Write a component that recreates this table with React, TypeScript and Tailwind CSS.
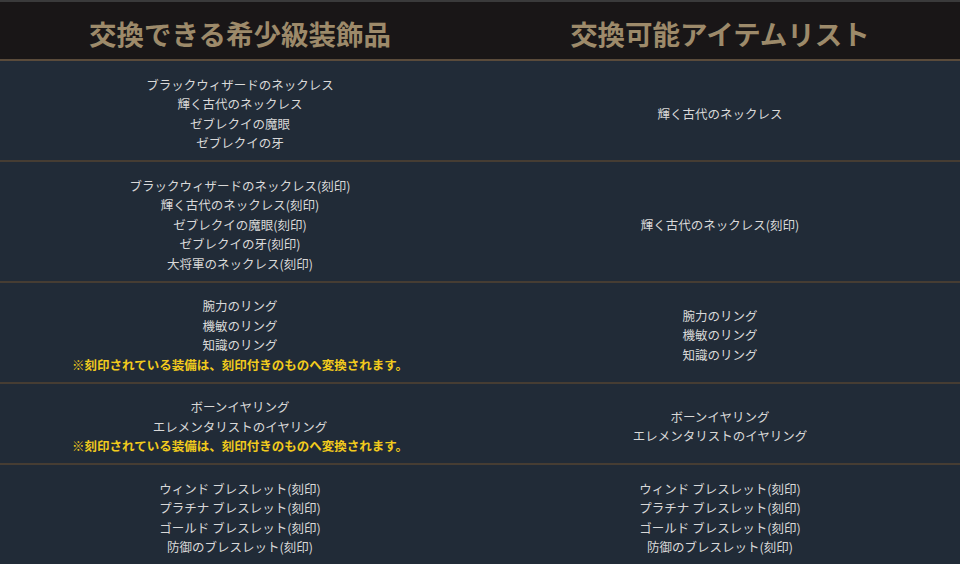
import React from "react";

const font = { fontFamily: '"Noto Sans CJK JP", "Noto Sans", sans-serif' };

type Row = { left: string[]; note?: boolean; right: string[] };

const NOTE = "※刻印されている装備は、刻印付きのものへ変換されます。";

const rows: Row[] = [
  {
    left: ["ブラックウィザードのネックレス", "輝く古代のネックレス", "ゼブレクイの魔眼", "ゼブレクイの牙"],
    right: ["輝く古代のネックレス"],
  },
  {
    left: [
      "ブラックウィザードのネックレス(刻印)",
      "輝く古代のネックレス(刻印)",
      "ゼブレクイの魔眼(刻印)",
      "ゼブレクイの牙(刻印)",
      "大将軍のネックレス(刻印)",
    ],
    right: ["輝く古代のネックレス(刻印)"],
  },
  {
    left: ["腕力のリング", "機敏のリング", "知識のリング"],
    note: true,
    right: ["腕力のリング", "機敏のリング", "知識のリング"],
  },
  {
    left: ["ボーンイヤリング", "エレメンタリストのイヤリング"],
    note: true,
    right: ["ボーンイヤリング", "エレメンタリストのイヤリング"],
  },
  {
    left: ["ウィンド ブレスレット(刻印)", "プラチナ ブレスレット(刻印)", "ゴールド ブレスレット(刻印)", "防御のブレスレット(刻印)"],
    right: ["ウィンド ブレスレット(刻印)", "プラチナ ブレスレット(刻印)", "ゴールド ブレスレット(刻印)", "防御のブレスレット(刻印)"],
  },
];

export default function App() {
  return (
    <div className="w-[960px] h-[564px] overflow-hidden bg-[#212b37]" style={font}>
      <div className="border-t-2 border-[#3a3a3b]">
        <div className="grid grid-cols-2 h-[59px] bg-[#191617] border-b-2 border-[#5a4b3b]">
          <div className="flex items-center justify-center text-[27.5px] font-bold text-[#9d8a6a] leading-none pt-[7px]">
            交換できる希少級装飾品
          </div>
          <div className="flex items-center justify-center text-[27.5px] font-bold text-[#9d8a6a] leading-none pt-[7px]">
            交換可能アイテムリスト
          </div>
        </div>
        {rows.map((r, i) => (
          <div key={i} className="grid grid-cols-2 border-b-2 border-[#463d33] text-[12.5px] leading-[19.5px] text-[#d9d9d9]">
            <div className="flex flex-col items-center justify-center pt-[13.5px] pb-[7.5px]">
              {r.left.map((t, j) => (
                <div key={j}>{t}</div>
              ))}
              {r.note && <div className="font-bold text-[#f2cb1d] text-[12.5px]">{NOTE}</div>}
            </div>
            <div className="flex flex-col items-center justify-center pt-[13.5px] pb-[7.5px]">
              {r.right.map((t, j) => (
                <div key={j}>{t}</div>
              ))}
            </div>
          </div>
        ))}
      </div>
    </div>
  );
}
